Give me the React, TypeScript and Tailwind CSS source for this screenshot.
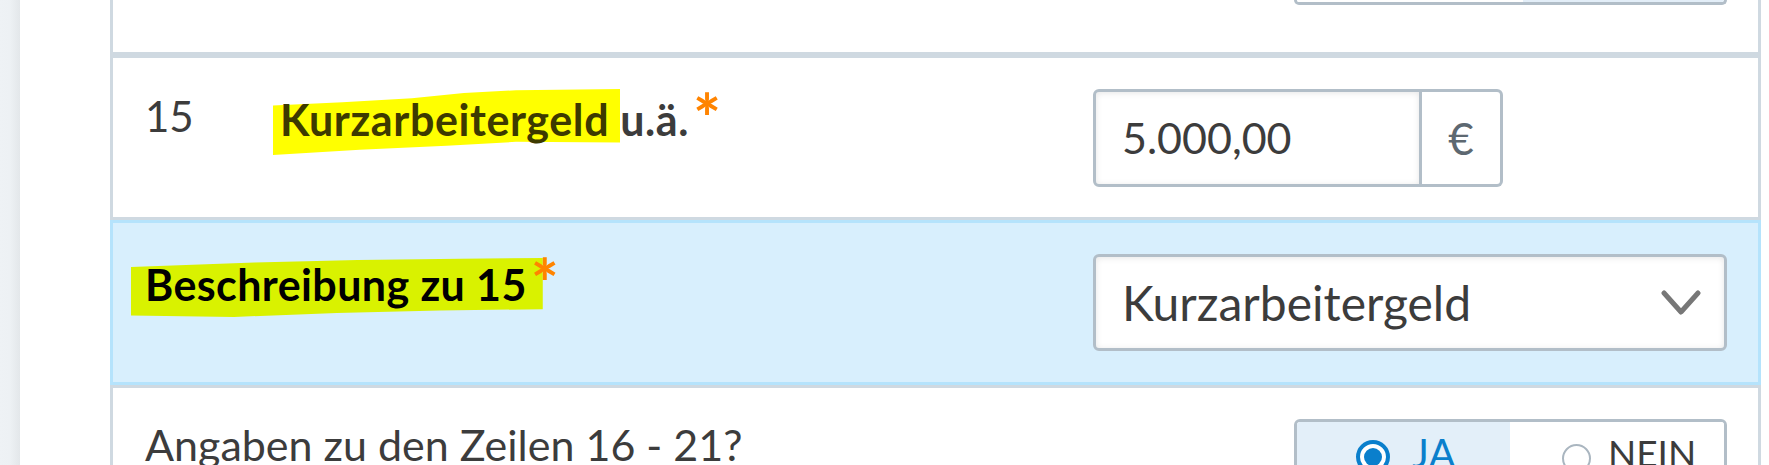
import React from 'react';

function Star() {
  return (
    <span className="relative -top-[10px] ml-[4px] align-top text-[66px] font-bold leading-none text-[#ff8400]">
      *
    </span>
  );
}

function Chevron() {
  return (
    <svg width="40" height="26" viewBox="0 0 40 26" fill="none">
      <polyline points="3,3 20,22 37,3" stroke="#777777" strokeWidth="5" strokeLinecap="round" strokeLinejoin="round" />
    </svg>
  );
}

export default function App() {
  return (
    <div className="flex h-[465px] w-[1769px] overflow-hidden bg-white font-['Lato',sans-serif] text-[#3c3c3c]">
      <div className="w-[20px] shrink-0 bg-gradient-to-r from-[#eef2f5] via-[#edf1f4] to-[#e3e7ea]" />
      <div className="w-[90px] shrink-0" />

      <div className="flex w-[1651px] shrink-0 flex-col">
        {/* previous row, only its foot shows */}
        <div className="flex h-[52px] shrink-0 justify-end border-x-[3px] border-[#cfd9e1] pr-[31px]">
          <div className="flex h-[5px] w-[433px] overflow-hidden rounded-b-[6px] border-x-[3px] border-b-[3px] border-[#b2bec8]">
            <div className="w-[226px] bg-white" />
            <div className="flex-1 bg-[#e3eef8]" />
          </div>
        </div>
        <div className="h-[6px] shrink-0 bg-[#cfd9e1]" />

        {/* Zeile 15 */}
        <div className="flex h-[159px] shrink-0 border-x-[3px] border-[#cfd9e1] pl-[32px]">
          <div className="w-[135px] pt-[33px] text-[42px] leading-[50px]">15</div>
          <div className="flex-1 pt-[37px] text-[43px] font-bold leading-[50px] tracking-[0.6px]">
            <span className="relative inline-block text-[#3d3a00]">
              <span className="absolute -top-[6px] -right-[11px] -bottom-[10px] -left-[7px] bg-[#ffff00] [clip-path:polygon(0%_25%,20%_20%,40%_14%,55%_6%,70%_2%,100%_0%,100%_81%,70%_80%,50%_86%,25%_92%,0%_100%)]" />
              <span className="relative">Kurzarbeitergeld</span>
            </span>{' '}
            u.ä.
            <Star />
          </div>
          <div className="flex w-[665px] items-center">
            <div className="flex h-[98px] w-[410px]">
              <div className="flex w-[329px] items-center rounded-l-[6px] border-[3px] border-[#b2bec8] bg-white pl-[26px] text-[43px] leading-[52px] shadow-[inset_0_1px_6px_rgba(0,0,0,0.1)]">
                5.000,00
              </div>
              <div className="flex flex-1 items-center justify-center rounded-r-[6px] border-y-[3px] border-r-[3px] border-[#b2bec8] bg-white text-[44px] text-[#5d6871]">
                €
              </div>
            </div>
          </div>
        </div>

        <div className="h-[3px] shrink-0 bg-[#cfd9e1]" />

        {/* Beschreibung zu 15 */}
        <div className="flex h-[165px] shrink-0 border-[3px] border-[#b5e3fc] bg-[#d8effd] pl-[32px]">
          <div className="flex-1 pt-[37px] text-[43px] font-bold leading-[50px] tracking-[0.4px] text-black">
            <span className="relative inline-block">
              <span className="absolute -top-[2px] -right-[16px] -bottom-[12px] -left-[14px] bg-[#d9f200] [clip-path:polygon(0%_14%,30%_7%,55%_3%,80%_1%,100%_0%,100%_80%,75%_82%,50%_86%,25%_92%,0%_90%)]" />
              <span className="relative">Beschreibung zu 15</span>
            </span>
            <Star />
          </div>
          <div className="flex w-[665px] items-center pr-[31px]">
            <div className="flex h-[97px] w-full items-center justify-between rounded-[6px] border-[3px] border-[#b2bec8] bg-white pr-[23px] pl-[26px] text-[48px] leading-[56px] shadow-[inset_0_1px_6px_rgba(0,0,0,0.1)]">
              <span>Kurzarbeitergeld</span>
              <Chevron />
            </div>
          </div>
        </div>

        <div className="h-[3px] shrink-0 bg-[#cfd9e1]" />

        {/* Zeilen 16 - 21 */}
        <div className="flex flex-1 justify-between border-x-[3px] border-[#cfd9e1] pr-[31px] pl-[32px]">
          <div className="pt-[32px] text-[43px] leading-[50px]">Angaben zu den Zeilen 16 - 21?</div>
          <div className="mt-[31px] flex h-[80px] w-[433px] overflow-hidden rounded-t-[6px] border-[3px] border-[#b2bec8]">
            <div className="flex w-[213px] items-start gap-[22px] bg-[#e3eff9] pt-[7px] pl-[59px]">
              <span className="mt-[11px] flex h-[34px] w-[34px] items-center justify-center rounded-full border-[4px] border-[#0a7fcc] bg-white">
                <span className="h-[18px] w-[18px] rounded-full bg-[#0a7fcc]" />
              </span>
              <span className="text-[40px] leading-[48px] text-[#0a7fcc]">JA</span>
            </div>
            <div className="flex flex-1 items-start gap-[17px] bg-white pt-[7px] pl-[52px]">
              <span className="mt-[15px] h-[29px] w-[29px] rounded-full border-[2px] border-[#aab6c0] bg-white" />
              <span className="text-[37px] leading-[48px]">NEIN</span>
            </div>
          </div>
        </div>
      </div>
    </div>
  );
}
